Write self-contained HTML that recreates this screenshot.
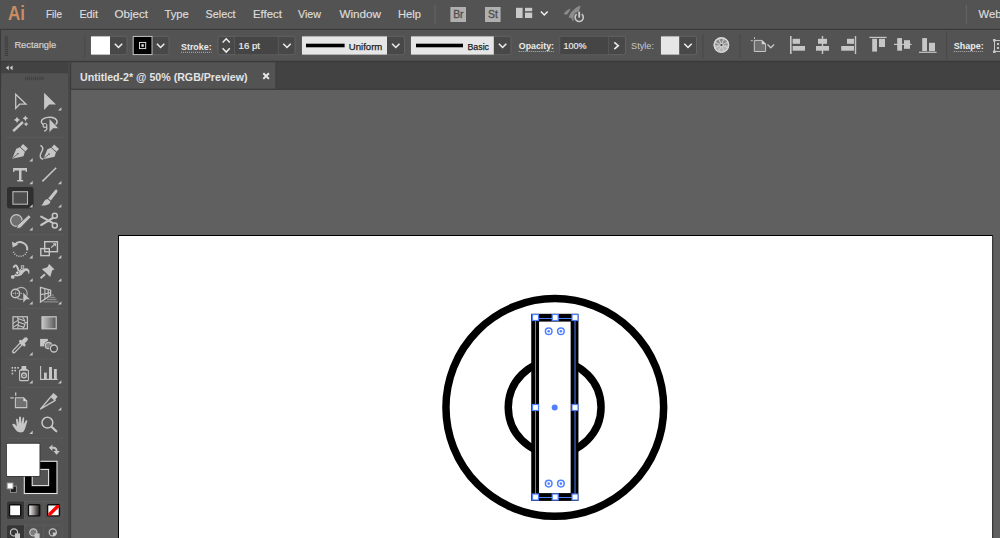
<!DOCTYPE html>
<html><head><meta charset="utf-8"><title>Illustrator</title>
<style>
html,body{margin:0;padding:0;background:#606060;overflow:hidden}
body{width:1000px;height:538px;position:relative}
svg{position:absolute;left:0;top:0;display:block;font-family:"Liberation Sans",sans-serif}
</style></head><body>
<svg width="1000" height="538" viewBox="0 0 1000 538">
<rect x="0" y="0" width="1000" height="538" fill="#606060" />
<rect x="0" y="0" width="1000" height="29" fill="#535353" />
<rect x="0" y="28.8" width="1000" height="1.3" fill="#3a3a3a" />
<rect x="0" y="30" width="1000" height="31" fill="#535353" />
<rect x="0" y="30" width="1" height="31" fill="#3a3a3a" />
<rect x="0" y="60.9" width="1000" height="29" fill="#424242" />
<rect x="0" y="60.9" width="1000" height="1.3" fill="#3a3a3a" />
<rect x="0" y="62" width="1.2" height="476" fill="#3a3a3a" />
<rect x="1.2" y="62.2" width="67" height="11" fill="#424242" />
<rect x="1.2" y="73.2" width="67" height="465" fill="#535353" />
<rect x="68.1" y="62" width="2.1" height="476" fill="#474747" />
<rect x="70.1" y="62" width="1.0" height="476" fill="#3c3c3c" />
<rect x="71.2" y="62.3" width="204.5" height="26.5" fill="#535353" />
<rect x="275.7" y="62.3" width="0.8" height="26.5" fill="#3a3a3a" />
<rect x="71.2" y="88.8" width="929" height="1.2" fill="#3e3e3e" />
<text x="8" y="20" font-size="20" fill="#c98d62" font-weight="bold" textLength="17" lengthAdjust="spacingAndGlyphs" >Ai</text>
<text x="46" y="18.2" font-size="11.6" fill="#dddddd" font-weight="normal" textLength="16" lengthAdjust="spacingAndGlyphs" stroke="#dddddd" stroke-width="0.18">File</text>
<text x="79.4" y="18.2" font-size="11.6" fill="#dddddd" font-weight="normal" textLength="18.6" lengthAdjust="spacingAndGlyphs" stroke="#dddddd" stroke-width="0.18">Edit</text>
<text x="114.4" y="18.2" font-size="11.6" fill="#dddddd" font-weight="normal" textLength="33.6" lengthAdjust="spacingAndGlyphs" stroke="#dddddd" stroke-width="0.18">Object</text>
<text x="164.4" y="18.2" font-size="11.6" fill="#dddddd" font-weight="normal" textLength="24.35" lengthAdjust="spacingAndGlyphs" stroke="#dddddd" stroke-width="0.18">Type</text>
<text x="205.6" y="18.2" font-size="11.6" fill="#dddddd" font-weight="normal" textLength="30.0" lengthAdjust="spacingAndGlyphs" stroke="#dddddd" stroke-width="0.18">Select</text>
<text x="253" y="18.2" font-size="11.6" fill="#dddddd" font-weight="normal" textLength="29" lengthAdjust="spacingAndGlyphs" stroke="#dddddd" stroke-width="0.18">Effect</text>
<text x="298" y="18.2" font-size="11.6" fill="#dddddd" font-weight="normal" textLength="23" lengthAdjust="spacingAndGlyphs" stroke="#dddddd" stroke-width="0.18">View</text>
<text x="339.4" y="18.2" font-size="11.6" fill="#dddddd" font-weight="normal" textLength="41.6" lengthAdjust="spacingAndGlyphs" stroke="#dddddd" stroke-width="0.18">Window</text>
<text x="398" y="18.2" font-size="11.6" fill="#dddddd" font-weight="normal" textLength="23" lengthAdjust="spacingAndGlyphs" stroke="#dddddd" stroke-width="0.18">Help</text>
<text x="978.6" y="18.2" font-size="11.6" fill="#dddddd" font-weight="normal" textLength="22.8" lengthAdjust="spacingAndGlyphs" stroke="#dddddd" stroke-width="0.18">Web</text>
<rect x="434.5" y="5" width="1" height="18.5" fill="#666666" />
<rect x="965.8" y="5" width="1" height="18.5" fill="#666666" />
<rect x="450.4" y="7" width="15.6" height="15" fill="#b0b0b0" />
<rect x="485" y="7" width="15.6" height="15" fill="#b0b0b0" />
<text x="453.2" y="18.2" font-size="10.5" fill="#4c4c4c" font-weight="normal" textLength="10.4" lengthAdjust="spacingAndGlyphs" stroke="#4c4c4c" stroke-width="0.3">Br</text>
<text x="488" y="18.2" font-size="10.5" fill="#4c4c4c" font-weight="normal" textLength="9.8" lengthAdjust="spacingAndGlyphs" stroke="#4c4c4c" stroke-width="0.3">St</text>
<rect x="516" y="7.8" width="6.6" height="10.2" fill="#c9c9c9" />
<rect x="525" y="7.8" width="7.2" height="3.4" fill="#c9c9c9" />
<rect x="525" y="12.6" width="7.2" height="5.4" fill="#c9c9c9" />
<path d="M540.9 11.45L544.3 14.95L547.6999999999999 11.45" fill="none" stroke="#ececec" stroke-width="1.6"/>
<g fill="#8c8c8c"><path d="M580.4 5.6C575.6 7 570.4 12 568.6 17.2L572.8 18.8C577.2 14.6 580.2 10 580.4 5.6Z"/><path d="M570.6 8.4C567.6 9.4 565 11.4 563.6 14L566.8 14.8C568.6 12.6 570 10.6 570.6 8.4Z"/><path d="M571.6 18L573 22L574 18.6Z"/></g>
<circle cx="579.2" cy="17.2" r="5.6" fill="#535353"/><path d="M576.6 14.2A4.1 4.1 0 1 0 581.8 14.2" fill="none" stroke="#c8c8c8" stroke-width="1.6"/><path d="M579.2 11.6V17.6" stroke="#c8c8c8" stroke-width="1.9"/>
<rect x="4.8" y="36.4" width="3.2" height="1" fill="#3a3a3a" />
<rect x="4.8" y="38.449999999999996" width="3.2" height="1" fill="#3a3a3a" />
<rect x="4.8" y="40.5" width="3.2" height="1" fill="#3a3a3a" />
<rect x="4.8" y="42.55" width="3.2" height="1" fill="#3a3a3a" />
<rect x="4.8" y="44.599999999999994" width="3.2" height="1" fill="#3a3a3a" />
<rect x="4.8" y="46.65" width="3.2" height="1" fill="#3a3a3a" />
<rect x="4.8" y="48.699999999999996" width="3.2" height="1" fill="#3a3a3a" />
<rect x="4.8" y="50.75" width="3.2" height="1" fill="#3a3a3a" />
<rect x="4.8" y="52.8" width="3.2" height="1" fill="#3a3a3a" />
<rect x="4.8" y="54.849999999999994" width="3.2" height="1" fill="#3a3a3a" />
<text x="14.4" y="48.2" font-size="9.5" fill="#d2d2d2" font-weight="normal" textLength="41.85" lengthAdjust="spacingAndGlyphs" stroke="#d2d2d2" stroke-width="0.2">Rectangle</text>
<rect x="84.5" y="34" width="0.8" height="23.5" fill="#484848" />
<rect x="91" y="36.3" width="36" height="18.4" rx="1.8" fill="#484848" stroke="#646464" stroke-width="0.9"/>
<rect x="91" y="36.4" width="19" height="18.2" fill="#ffffff" />
<path d="M114.8 43.75L118.5 47.45L122.2 43.75" fill="none" stroke="#ececec" stroke-width="1.6"/>
<rect x="133" y="36.3" width="36" height="18.4" rx="1.8" fill="#484848" stroke="#646464" stroke-width="0.9"/>
<rect x="133.2" y="36.4" width="18.8" height="18.2" fill="#000000" stroke="#cfcfcf" stroke-width="0.9"/>
<rect x="139.5" y="42.4" width="6.2" height="6.2" fill="none" stroke="#e8e8e8" stroke-width="0.9"/>
<rect x="141.4" y="44.3" width="2.4" height="2.4" fill="#e8e8e8" />
<path d="M156.9 43.75L160.6 47.45L164.29999999999998 43.75" fill="none" stroke="#ececec" stroke-width="1.6"/>
<text x="181" y="49.6" font-size="9.5" fill="#ececec" font-weight="bold" textLength="30.6" lengthAdjust="spacingAndGlyphs" >Stroke:</text>
<path d="M181 52.3H211.6" stroke="#bdbdbd" stroke-width="0.9" stroke-dasharray="1 1"/>
<rect x="218" y="36.3" width="77" height="18.4" rx="1.8" fill="#484848" stroke="#646464" stroke-width="0.9"/>
<rect x="235" y="36.7" width="42.6" height="17.6" fill="#454545" />
<rect x="234.2" y="36.7" width="0.8" height="17.6" fill="#5c5c5c" />
<rect x="277.8" y="36.7" width="0.9" height="17.6" fill="#5c5c5c" />
<path d="M222.6 42.550000000000004L226.2 38.85L229.79999999999998 42.550000000000004" fill="none" stroke="#ececec" stroke-width="1.5"/>
<path d="M222.6 48.35L226.2 52.050000000000004L229.79999999999998 48.35" fill="none" stroke="#ececec" stroke-width="1.5"/>
<text x="238.6" y="48.9" font-size="9.5" fill="#ececec" font-weight="normal" textLength="21.4" lengthAdjust="spacingAndGlyphs" stroke="#ececec" stroke-width="0.2">16 pt</text>
<path d="M283.3 43.75L287 47.45L290.7 43.75" fill="none" stroke="#ececec" stroke-width="1.6"/>
<rect x="302" y="36.3" width="102.5" height="18.4" rx="1.8" fill="#484848" stroke="#646464" stroke-width="0.9"/>
<rect x="302" y="36.4" width="85" height="18.2" fill="#e6e6e6" />
<rect x="306" y="43.7" width="38.6" height="3.6" fill="#000" />
<text x="348.8" y="49.6" font-size="9.5" fill="#1c1c1c" font-weight="normal" textLength="33.5" lengthAdjust="spacingAndGlyphs" stroke="#1c1c1c" stroke-width="0.25">Uniform</text>
<path d="M392.1 43.75L395.8 47.45L399.5 43.75" fill="none" stroke="#ececec" stroke-width="1.6"/>
<rect x="411" y="36.3" width="100" height="18.4" rx="1.8" fill="#484848" stroke="#646464" stroke-width="0.9"/>
<rect x="411" y="36.4" width="82.8" height="18.2" fill="#e6e6e6" />
<rect x="416" y="43.7" width="47" height="3.6" fill="#000" />
<text x="467.5" y="49.6" font-size="9.5" fill="#1c1c1c" font-weight="normal" textLength="21.5" lengthAdjust="spacingAndGlyphs" stroke="#1c1c1c" stroke-width="0.25">Basic</text>
<path d="M498.90000000000003 43.75L502.6 47.45L506.3 43.75" fill="none" stroke="#ececec" stroke-width="1.6"/>
<text x="518.8" y="48.8" font-size="9.5" fill="#ececec" font-weight="bold" textLength="35.2" lengthAdjust="spacingAndGlyphs" >Opacity:</text>
<path d="M518.75 51.5H554" stroke="#bdbdbd" stroke-width="0.9" stroke-dasharray="1 1"/>
<rect x="560" y="36.3" width="65.5" height="18.4" rx="1.8" fill="#484848" stroke="#646464" stroke-width="0.9"/>
<rect x="560.4" y="36.7" width="48" height="17.6" fill="#454545" />
<rect x="608.3" y="36.7" width="0.7" height="17.6" fill="#5c5c5c" />
<text x="563.6" y="48.5" font-size="9.5" fill="#ececec" font-weight="normal" textLength="23.0" lengthAdjust="spacingAndGlyphs" stroke="#ececec" stroke-width="0.2">100%</text>
<path d="M614.3 42.3L618.3 45.7L614.3 49.1" fill="none" stroke="#ececec" stroke-width="1.6"/>
<text x="631" y="48.8" font-size="9.5" fill="#c6c6c6" font-weight="normal" textLength="23" lengthAdjust="spacingAndGlyphs" >Style:</text>
<rect x="661" y="36.3" width="35.5" height="18.4" rx="1.8" fill="#484848" stroke="#646464" stroke-width="0.9"/>
<rect x="661" y="36.4" width="18.2" height="18.2" fill="#e6e6e6" />
<path d="M684.3 43.75L688 47.45L691.7 43.75" fill="none" stroke="#ececec" stroke-width="1.6"/>
<rect x="702.6" y="34" width="0.9" height="23.5" fill="#484848" />
<rect x="739.6" y="34" width="0.9" height="23.5" fill="#484848" />
<circle cx="721.4" cy="45" r="7.2" fill="#8c8c8c" stroke="#d8d8d8" stroke-width="1.3"/>
<path d="M714.2 45A7.2 7.2 0 0 0 728.6 45Z" fill="#b4b4b4"/>
<path d="M723.06 45.69L727.87 47.68" stroke="#d6d6d6" stroke-width="0.9"/>
<path d="M722.09 46.66L724.08 51.47" stroke="#d6d6d6" stroke-width="0.9"/>
<path d="M720.71 46.66L718.72 51.47" stroke="#d6d6d6" stroke-width="0.9"/>
<path d="M719.74 45.69L714.93 47.68" stroke="#d6d6d6" stroke-width="0.9"/>
<path d="M719.74 44.31L714.93 42.32" stroke="#d6d6d6" stroke-width="0.9"/>
<path d="M720.71 43.34L718.72 38.53" stroke="#d6d6d6" stroke-width="0.9"/>
<path d="M722.09 43.34L724.08 38.53" stroke="#d6d6d6" stroke-width="0.9"/>
<path d="M723.06 44.31L727.87 42.32" stroke="#d6d6d6" stroke-width="0.9"/>
<circle cx="721.4" cy="45" r="7.2" fill="none" stroke="#d8d8d8" stroke-width="1.3"/><circle cx="721.4" cy="45" r="2" fill="#d0d0d0"/><circle cx="721.4" cy="45" r="1.1" fill="#3c3c3c"/>
<path d="M754.3 40.4H762L765.6 44V51.5H754.3Z" fill="#707070" stroke="#c6c6c6" stroke-width="1"/><path d="M762 40.4L765.6 44H762Z" fill="#dcdcdc" stroke="#c6c6c6" stroke-width="0.6"/><path d="M750.8 40.7H752.8M754.5 37.2V39" stroke="#c6c6c6" stroke-width="1"/>
<path d="M767.5 44.45L770.8 47.75L774.0999999999999 44.45" fill="none" stroke="#c6c6c6" stroke-width="1.3"/>
<rect x="790" y="36" width="1.6" height="18" fill="#c6c6c6" />
<rect x="792.6" y="38.8" width="7.4" height="5" fill="#c6c6c6" />
<rect x="792.6" y="46" width="12.4" height="4.7" fill="#c6c6c6" />
<rect x="821.8" y="36" width="1.4" height="18" fill="#c6c6c6" />
<rect x="818" y="38.8" width="9" height="5" fill="#c6c6c6" />
<rect x="816" y="46" width="13" height="4.7" fill="#c6c6c6" />
<rect x="854.8" y="36" width="1.4" height="18" fill="#c6c6c6" />
<rect x="847" y="38.8" width="7" height="5" fill="#c6c6c6" />
<rect x="841.2" y="46" width="12.8" height="4.7" fill="#c6c6c6" />
<rect x="869.4" y="36.8" width="17.2" height="1.2" fill="#c6c6c6" />
<rect x="872.2" y="38.8" width="4.8" height="12.8" fill="#c6c6c6" />
<rect x="879" y="38.8" width="6" height="8.2" fill="#c6c6c6" />
<rect x="894" y="43.8" width="17.6" height="1.2" fill="#c6c6c6" />
<rect x="897.2" y="38.1" width="4.8" height="12.6" fill="#c6c6c6" />
<rect x="904" y="40.2" width="6" height="8.6" fill="#c6c6c6" />
<rect x="919" y="51.7" width="17.6" height="1.2" fill="#c6c6c6" />
<rect x="922.2" y="38.1" width="4.8" height="13" fill="#c6c6c6" />
<rect x="929" y="42.8" width="6" height="8.3" fill="#c6c6c6" />
<rect x="946.2" y="31" width="0.9" height="29.5" fill="#484848" />
<text x="953.75" y="49.2" font-size="9.5" fill="#ececec" font-weight="bold" textLength="30.0" lengthAdjust="spacingAndGlyphs" >Shape:</text>
<path d="M953.75 51.5H983.75" stroke="#bdbdbd" stroke-width="0.9" stroke-dasharray="1 1"/>
<path d="M994.5 40.5V51.5M994.5 40.5H1000M994.5 51.5H1000" stroke="#c6c6c6" stroke-width="1" fill="none"/><rect x="993" y="39" width="2.6" height="2.6" fill="#c6c6c6"/><rect x="993" y="50.4" width="2.6" height="2.6" fill="#c6c6c6"/><rect x="997" y="43" width="2" height="2" fill="#c6c6c6"/><rect x="997" y="47" width="2" height="2" fill="#c6c6c6"/>
<text x="80" y="80.8" font-size="10.6" fill="#e4e4e4" font-weight="bold" textLength="167.5" lengthAdjust="spacingAndGlyphs" >Untitled-2* @ 50% (RGB/Preview)</text>
<path d="M263.3 73.3L268.9 78.9M268.9 73.3L263.3 78.9" stroke="#e8e8e8" stroke-width="2"/>
<path d="M8.8 65.4L5.8 67.8L8.8 70.2ZM12.6 65.4L9.6 67.8L12.6 70.2Z" fill="#d0d0d0"/>
<rect x="25.3" y="76.6" width="0.9" height="3.6" fill="#3e3e3e" />
<rect x="27.2" y="76.6" width="0.9" height="3.6" fill="#3e3e3e" />
<rect x="29.1" y="76.6" width="0.9" height="3.6" fill="#3e3e3e" />
<rect x="31.0" y="76.6" width="0.9" height="3.6" fill="#3e3e3e" />
<rect x="32.9" y="76.6" width="0.9" height="3.6" fill="#3e3e3e" />
<rect x="34.8" y="76.6" width="0.9" height="3.6" fill="#3e3e3e" />
<rect x="36.7" y="76.6" width="0.9" height="3.6" fill="#3e3e3e" />
<rect x="38.6" y="76.6" width="0.9" height="3.6" fill="#3e3e3e" />
<rect x="40.5" y="76.6" width="0.9" height="3.6" fill="#3e3e3e" />
<rect x="42.4" y="76.6" width="0.9" height="3.6" fill="#3e3e3e" />
<rect x="6" y="136.9" width="57.5" height="1" fill="#5b5b5b"/>
<rect x="6" y="233.8" width="57.5" height="1" fill="#5b5b5b"/>
<rect x="6" y="307.8" width="57.5" height="1" fill="#5b5b5b"/>
<rect x="6" y="358.7" width="57.5" height="1" fill="#5b5b5b"/>
<rect x="6" y="386.9" width="57.5" height="1" fill="#5b5b5b"/>
<rect x="6" y="437.7" width="57.5" height="1" fill="#5b5b5b"/>
<path d="M15.7 94.2V108.4L19.6 104.2H26Z" fill="none" stroke="#c6c6c6" stroke-width="1.3" stroke-linejoin="miter"/>
<path d="M44.1 92.8V110L49.2 104.4H56Z" fill="#c6c6c6"/>
<path d="M61.4 110.6H58.0L61.4 107.19999999999999Z" fill="#c6c6c6"/>
<path d="M13.2 131.2L22.9 122" stroke="#c6c6c6" stroke-width="2.5"/>
<path d="M17 116.7L18.088 118.81200000000001L20.2 119.9L18.088 120.988L17 123.10000000000001L15.911999999999999 120.988L13.8 119.9L15.911999999999999 118.81200000000001Z" fill="#c6c6c6"/>
<path d="M25.4 115.39999999999999L26.386 117.314L28.299999999999997 118.3L26.386 119.286L25.4 121.2L24.413999999999998 119.286L22.5 118.3L24.413999999999998 117.314Z" fill="#c6c6c6"/>
<path d="M26.1 121.8L26.882 123.318L28.400000000000002 124.1L26.882 124.88199999999999L26.1 126.39999999999999L25.318 124.88199999999999L23.8 124.1L25.318 123.318Z" fill="#c6c6c6"/>
<path d="M43 124.4C40.4 122.6 41 120 43.6 118.6C47.4 116.4 54.4 116.6 56.4 119.8C57.4 121.4 57 123.4 55.4 124.6" fill="none" stroke="#c6c6c6" stroke-width="1.5"/>
<circle cx="45" cy="125.4" r="1.9" fill="none" stroke="#c6c6c6" stroke-width="1.2"/><path d="M46.6 126.6C47.4 128.8 46.6 130.6 44.2 131" fill="none" stroke="#c6c6c6" stroke-width="1.3"/>
<path d="M49.2 118.4V132.8L53 128.6H58.8Z" fill="#c6c6c6" stroke="#535353" stroke-width="0.6"/>
<g transform="translate(0 0)"><path d="M20 147.3L24.9 151.8L23.5 156.3L12.1 158.8L16.3 148.8Z" fill="#c6c6c6"/><path d="M23 144.1L27.9 148.5L25.4 151.4L20.4 147Z" fill="#c6c6c6"/><path d="M20.1 147.1L25.1 151.7" stroke="#535353" stroke-width="0.5"/><path d="M12.8 158L17.6 154" stroke="#535353" stroke-width="0.8"/><circle cx="17.9" cy="153.7" r="0.8" fill="#535353"/></g>
<g transform="translate(31.1 0.4)"><path d="M20 147.3L24.9 151.8L23.5 156.3L12.1 158.8L16.3 148.8Z" fill="#c6c6c6"/><path d="M23 144.1L27.9 148.5L25.4 151.4L20.4 147Z" fill="#c6c6c6"/><path d="M20.1 147.1L25.1 151.7" stroke="#535353" stroke-width="0.5"/><path d="M12.8 158L17.6 154" stroke="#535353" stroke-width="0.8"/><circle cx="17.9" cy="153.7" r="0.8" fill="#535353"/></g>
<path d="M40.4 145.4C43.4 147 43.4 149.6 41.4 152.4C39.4 155.2 39.8 158.8 43 159.2" fill="none" stroke="#c6c6c6" stroke-width="1.5"/>
<path d="M32.7 161.4H29.300000000000004L32.7 158.0Z" fill="#c6c6c6"/>
<path d="M13.1 168.1H27V172.1H25.7V170.5H21.5V180H23.2V181.4H17.2V180H19V170.5H14.4V172.1H13.1Z" fill="#c6c6c6"/>
<path d="M42.4 181.4L56.2 167.8" stroke="#c6c6c6" stroke-width="1.5"/>
<path d="M32.7 184.2H29.300000000000004L32.7 180.79999999999998Z" fill="#c6c6c6"/>
<path d="M61.4 184.2H58.0L61.4 180.79999999999998Z" fill="#c6c6c6"/>
<rect x="7" y="187" width="26.6" height="21.4" rx="2.4" fill="#2f2f2f"/>
<rect x="12.9" y="191.7" width="14.6" height="12.5" fill="#4c4c4c" stroke="#b6b6b6" stroke-width="1.1"/>
<path d="M56.9 189.7C57.8 190.4 57.5 191.8 56.6 193L50.9 200.5L48.1 198.4L54.3 191C55.2 189.9 56.2 189.3 56.9 189.7Z" fill="#c6c6c6"/><path d="M47.3 199L50.3 201.3C50.6 204.4 46.6 205.9 41.1 205.4C44 204 43.2 199.8 47.3 199Z" fill="#c6c6c6"/>
<path d="M32.7 207.6H29.300000000000004L32.7 204.2Z" fill="#c6c6c6"/>
<path d="M61.4 207.6H58.0L61.4 204.2Z" fill="#c6c6c6"/>
<circle cx="16.4" cy="220.5" r="5.8" fill="#707070" stroke="#c6c6c6" stroke-width="1.3"/>
<path d="M28.7 214.9L31.1 217L20.5 227.9L16.7 228.8L17.3 225.3Z" fill="#c6c6c6" stroke="#535353" stroke-width="0.8"/>
<path d="M41.2 216.7L52.6 222.9M41.2 225L52.6 218.2" stroke="#c6c6c6" stroke-width="2.1" stroke-linecap="round"/><circle cx="54.8" cy="215.8" r="2.5" fill="none" stroke="#c6c6c6" stroke-width="1.5"/><circle cx="54.8" cy="225.6" r="2.5" fill="none" stroke="#c6c6c6" stroke-width="1.5"/>
<path d="M32.7 230.6H29.300000000000004L32.7 227.2Z" fill="#c6c6c6"/>
<path d="M61.4 230.6H58.0L61.4 227.2Z" fill="#c6c6c6"/>
<path d="M14.82 244.55A7.1 7.1 0 0 1 27.13 250.29" fill="none" stroke="#c6c6c6" stroke-width="1.9"/><path d="M12 241.8L18.2 244.6L12.7 247.5Z" fill="#c6c6c6"/><path d="M26.68 251.96A7.1 7.1 0 0 1 13.16 250.78" fill="none" stroke="#c6c6c6" stroke-width="1.5" stroke-dasharray="1 1.25"/>
<rect x="44.7" y="241.7" width="12.7" height="10" fill="none" stroke="#c6c6c6" stroke-width="1.4"/><rect x="40.8" y="248.6" width="8.5" height="7" fill="none" stroke="#c6c6c6" stroke-width="1.4"/><path d="M51.2 247.6L55 244" fill="none" stroke="#c6c6c6" stroke-width="1.3"/><path d="M52.6 243.2H56V246.6Z" fill="#c6c6c6"/>
<path d="M32.7 258.4H29.300000000000004L32.7 254.99999999999997Z" fill="#c6c6c6"/>
<path d="M61.4 258.4H58.0L61.4 254.99999999999997Z" fill="#c6c6c6"/>
<path d="M13.6 267.9C13.7 265.5 15.9 264.7 17 266.5C18 268.4 18.5 270.4 18.7 272.4" fill="none" stroke="#c6c6c6" stroke-width="1.9"/><path d="M14.2 275.2C16 273.6 17.6 272.8 18.6 270.8C20.6 270.8 22.4 269.3 24.4 268.6C27.6 267.4 29.7 269.6 29.5 272C29.4 273 29.2 273.8 28.7 274.5C28.4 272.4 27.6 270.7 26.2 270.7C24 270.9 23 274.4 20.6 275.6C18.4 276.7 15.4 276.7 14.2 275.2Z" fill="#c6c6c6"/><path d="M21.8 268L18.2 272" stroke="#c6c6c6" stroke-width="0.9"/><rect x="21.3" y="265.8" width="2.4" height="2.4" fill="#535353" stroke="#c6c6c6" stroke-width="0.9"/><circle cx="17.3" cy="272.7" r="1.6" fill="#e4e4e4" stroke="#535353" stroke-width="0.8"/><circle cx="12.8" cy="276.9" r="1.9" fill="#c6c6c6"/><path d="M13.6 276.2L16 274.6" stroke="#c6c6c6" stroke-width="0.9"/>
<path d="M49.1 264.1L54.5 269.4L52.7 270L52 271L50.2 276.9L41.9 269.1L47.4 267.2L48.3 265.5Z" fill="#c6c6c6"/><path d="M45 274.2L40.6 278.2" stroke="#c6c6c6" stroke-width="1.9"/>
<path d="M32.7 281.6H29.300000000000004L32.7 278.20000000000005Z" fill="#c6c6c6"/>
<path d="M61.4 281.6H58.0L61.4 278.20000000000005Z" fill="#c6c6c6"/>
<circle cx="21.2" cy="293.4" r="6" fill="none" stroke="#b0b0b0" stroke-width="1.1"/><circle cx="15.4" cy="293.5" r="4.2" fill="#4a4a4a" fill-opacity="0.55" stroke="#c6c6c6" stroke-width="1.4"/><path d="M12.8 293.4H22.6" stroke="#c6c6c6" stroke-width="1.1" stroke-dasharray="1 1"/><path d="M23 292.2V303L26.4 299.4H30.4Z" fill="#c6c6c6" stroke="#535353" stroke-width="0.5"/>
<path d="M40.5 287.4L50.6 290.2V295.4L40.5 302Z" fill="none" stroke="#c6c6c6" stroke-width="1.3"/><path d="M44.9 288.6V299.2M48.2 289.6V297M40.5 294.6L50.6 292.8" stroke="#c6c6c6" stroke-width="1.1" fill="none"/><path d="M51.6 295.2H53.8M49.8 297.3H55.2M47 299.5H56.6M43.4 301.8H58.4" stroke="#8c8c8c" stroke-width="1.3"/>
<path d="M32.7 304.6H29.300000000000004L32.7 301.20000000000005Z" fill="#c6c6c6"/>
<path d="M61.4 304.6H58.0L61.4 301.20000000000005Z" fill="#c6c6c6"/>
<rect x="13" y="316.8" width="14.4" height="12" fill="none" stroke="#c6c6c6" stroke-width="1.2"/><path d="M17.6 317C18.5 320 18.5 325 17.8 328.6M22.4 317C25.6 320.4 25.8 325 23 328.6M17.9 318.6L24.4 320.8M18.3 322L25.4 324.4M18.2 325.4L24.2 327.6M17.9 320.4L13 323.4M18.1 324.2L13 327.4M25.4 322.6H27.4" fill="none" stroke="#c6c6c6" stroke-width="1.05"/>
<defs><linearGradient id="gt" x1="0" x2="1" y1="0" y2="0"><stop offset="0" stop-color="#c8c8c8"/><stop offset="1" stop-color="#565656"/></linearGradient><linearGradient id="gb" x1="0" x2="1" y1="0" y2="0"><stop offset="0" stop-color="#ffffff"/><stop offset="1" stop-color="#1a1212"/></linearGradient></defs>
<rect x="42" y="316.8" width="14.2" height="12" fill="url(#gt)" stroke="#c6c6c6" stroke-width="1.2"/>
<path d="M13.9 351.5L21.6 343.4" stroke="#c6c6c6" stroke-width="3.9" stroke-linecap="round"/><path d="M14.1 351.3L20.4 344.7" stroke="#535353" stroke-width="1.5" stroke-linecap="round"/><path d="M20.4 341.3L24.2 345" stroke="#c6c6c6" stroke-width="2.8" stroke-linecap="round"/><path d="M22.4 342.8L25.8 339.3" stroke="#c6c6c6" stroke-width="4.1" stroke-linecap="round"/>
<rect x="40.1" y="338.9" width="7.8" height="7.5" fill="#c6c6c6"/><circle cx="48.5" cy="345.5" r="4.4" fill="#535353"/><circle cx="48.5" cy="345.5" r="3.2" fill="#8a8a8a" stroke="#c6c6c6" stroke-width="1.2"/><circle cx="53.9" cy="348.5" r="4.7" fill="#535353"/><circle cx="53.9" cy="348.5" r="3.5" fill="#4e4e4e" stroke="#c6c6c6" stroke-width="1.3"/>
<path d="M32.7 355.4H29.300000000000004L32.7 352.0Z" fill="#c6c6c6"/>
<rect x="11.6" y="367.0" width="1.6" height="1.6" fill="#c6c6c6"/>
<rect x="14.399999999999999" y="367.0" width="1.6" height="1.6" fill="#c6c6c6"/>
<rect x="17.2" y="367.0" width="1.6" height="1.6" fill="#c6c6c6"/>
<rect x="11.6" y="369.8" width="1.6" height="1.6" fill="#c6c6c6"/>
<rect x="14.399999999999999" y="369.8" width="1.6" height="1.6" fill="#c6c6c6"/>
<rect x="11.6" y="372.8" width="1.6" height="1.6" fill="#c6c6c6"/>
<rect x="19.6" y="370.2" width="8.8" height="10.4" rx="0.8" fill="none" stroke="#c6c6c6" stroke-width="1.1"/><path d="M21.6 366H26.2V368.4L28.4 370.3H19.6L21.6 368.4Z" fill="#c6c6c6"/><circle cx="24" cy="375.4" r="2.4" fill="none" stroke="#c6c6c6" stroke-width="1.3"/><circle cx="24" cy="375.4" r="0.9" fill="#a0a0a0"/>
<path d="M40.6 366V379.4H57.6" fill="none" stroke="#c6c6c6" stroke-width="1.1"/><rect x="44" y="372.6" width="2.8" height="6.4" fill="#c6c6c6"/><rect x="49" y="367" width="3" height="12" fill="#c6c6c6"/><rect x="54" y="369" width="2.8" height="10" fill="#c6c6c6"/>
<path d="M32.7 383.6H29.300000000000004L32.7 380.20000000000005Z" fill="#c6c6c6"/>
<path d="M61.4 383.6H58.0L61.4 380.20000000000005Z" fill="#c6c6c6"/>
<path d="M15.4 397.8H23.6L26.8 401V407.6H15.4Z" fill="#707070" stroke="#c6c6c6" stroke-width="1.1"/><path d="M23.6 397.8V401H26.8Z" fill="#dcdcdc" stroke="#c6c6c6" stroke-width="0.6"/><path d="M10.3 397.9H13.8M15.7 392.5V395.7" stroke="#c6c6c6" stroke-width="1.3"/>
<path d="M40.6 409L51 396.6L55.2 400.4Z" fill="none" stroke="#c6c6c6" stroke-width="1.4" stroke-linejoin="round"/><path d="M50.8 396L53.4 393L57.6 396.6L55.2 400Z" fill="#c6c6c6"/>
<path d="M61.4 410.6H58.0L61.4 407.20000000000005Z" fill="#c6c6c6"/>
<path d="M17.2 431.6C15.4 430 13.6 427 12.2 424.6C12.8 423.4 14.4 423.6 15.4 424.8L16.8 426.4L16 419.6C16.2 418.4 17.6 418.4 17.8 419.6L18.8 423.8L19 417.4C19.2 416.2 20.8 416.2 21 417.4L21.4 423.6L22.6 418C22.8 417 24.2 417.2 24.2 418.2L23.8 424L25.8 420.6C26.4 419.8 27.6 420.4 27.2 421.4C26 424.8 25.6 429 23.4 431.8C21.4 432.6 19 432.6 17.2 431.6Z" fill="#c6c6c6"/>
<circle cx="47.4" cy="422.7" r="5.4" fill="none" stroke="#c6c6c6" stroke-width="1.5"/><path d="M51.7 426.9L56.3 431.3" stroke="#c6c6c6" stroke-width="2.2" stroke-linecap="round"/>
<path d="M32.7 434H29.300000000000004L32.7 430.6Z" fill="#c6c6c6"/>
<path d="M51.4 447.7H53.4C55.8 447.7 56.6 449.2 56.6 451.4" fill="none" stroke="#c6c6c6" stroke-width="1.9"/><path d="M48.9 447.7L52.4 444.4V451Z" fill="#c6c6c6"/><path d="M56.6 454.8L53.4 451H59.8Z" fill="#c6c6c6"/>
<rect x="24.3" y="461.3" width="32.7" height="32.2" fill="#000" stroke="#e4e4e4" stroke-width="1.1"/>
<rect x="32.2" y="469.4" width="16.4" height="16.2" fill="#535353" stroke="#e4e4e4" stroke-width="1.1"/>
<rect x="6" y="442.8" width="34.4" height="34" rx="1.6" fill="#353535"/>
<rect x="6.9" y="443.7" width="32.6" height="32.2" rx="0.6" fill="#fff"/>
<rect x="10.4" y="486.2" width="6" height="6.2" fill="#1a1a1a" stroke="#8e8e8e" stroke-width="1"/><rect x="7.2" y="483" width="5.8" height="5.8" fill="#fff" stroke="#9a9a9a" stroke-width="0.9"/>
<rect x="6.8" y="501.4" width="55.4" height="17.6" rx="1.5" fill="#535353" stroke="#5e5e5e" stroke-width="0.8"/>
<path d="M8.4 501.4H23.9V519H8.4Q6.9 519 6.9 517.5V502.9Q6.9 501.4 8.4 501.4Z" fill="#363636"/>
<rect x="24.2" y="501.6" width="0.8" height="17.2" fill="#5e5e5e"/><rect x="43.2" y="501.6" width="0.8" height="17.2" fill="#5e5e5e"/>
<rect x="9.5" y="504.7" width="11.2" height="11.2" rx="0.8" fill="#fff" stroke="#0e0e0e" stroke-width="1.4"/>
<rect x="28.5" y="504.7" width="11.2" height="11.2" rx="0.8" fill="url(#gb)" stroke="#0e0e0e" stroke-width="1.4"/>
<clipPath id="cn"><rect x="48.2" y="505.1" width="10.8" height="10.6"/></clipPath><rect x="47.6" y="504.7" width="11.8" height="11.2" rx="0.8" fill="#fff" stroke="#0e0e0e" stroke-width="1.4"/><path d="M47.4 516.6L59.8 504.2" stroke="#ff0000" stroke-width="3.4" clip-path="url(#cn)"/>
<rect x="6.8" y="525.2" width="55.4" height="14" rx="1.5" fill="#535353" stroke="#5e5e5e" stroke-width="0.8"/>
<path d="M8.4 525.2H23.9V539H6.9V526.7Q6.9 525.2 8.4 525.2Z" fill="#363636"/>
<rect x="24.2" y="525.4" width="0.8" height="13" fill="#5e5e5e"/><rect x="43.2" y="525.4" width="0.8" height="13" fill="#5e5e5e"/>
<circle cx="14" cy="532.4" r="3.6" fill="none" stroke="#c6c6c6" stroke-width="1.2"/><rect x="15" y="533.4" width="5" height="5" fill="#c6c6c6"/>
<circle cx="33.4" cy="532.4" r="3.6" fill="#7a7a7a" stroke="#c6c6c6" stroke-width="1.2"/><rect x="34.6" y="533.4" width="5" height="5" fill="#c6c6c6"/>
<circle cx="52.8" cy="532.4" r="3.6" fill="none" stroke="#c6c6c6" stroke-width="1.2"/><path d="M52.8 532.4H56.4A3.6 3.6 0 0 1 52.8 536Z" fill="#c6c6c6"/>
<rect x="118" y="235" width="875" height="310" fill="#000"/>
<rect x="992" y="235.6" width="1.2" height="310" fill="#3a3a3a"/>
<rect x="119" y="236" width="873" height="310" fill="#fff"/>
<circle cx="554.8" cy="407.45" r="108.85" fill="none" stroke="#000" stroke-width="7.5"/>
<circle cx="554.65" cy="407.3" r="46.4" fill="none" stroke="#000" stroke-width="7.5"/>
<rect x="535.15" y="317.7" width="39.4" height="179.3" fill="#fff" stroke="#000" stroke-width="7.8"/>
<rect x="535.5" y="318.5" width="39.5" height="179" fill="none" stroke="#4f80ff" stroke-width="1"/>
<rect x="532.5" y="314.5" width="6" height="6" fill="#fff" stroke="#4f80ff" stroke-width="1.2"/>
<rect x="552.2" y="314.5" width="6" height="6" fill="#fff" stroke="#4f80ff" stroke-width="1.2"/>
<rect x="572" y="314.5" width="6" height="6" fill="#fff" stroke="#4f80ff" stroke-width="1.2"/>
<rect x="532.5" y="404.5" width="6" height="6" fill="#fff" stroke="#4f80ff" stroke-width="1.2"/>
<rect x="572" y="404.5" width="6" height="6" fill="#fff" stroke="#4f80ff" stroke-width="1.2"/>
<rect x="532.5" y="494" width="6" height="6" fill="#fff" stroke="#4f80ff" stroke-width="1.2"/>
<rect x="552.2" y="494" width="6" height="6" fill="#fff" stroke="#4f80ff" stroke-width="1.2"/>
<rect x="572" y="494" width="6" height="6" fill="#fff" stroke="#4f80ff" stroke-width="1.2"/>
<circle cx="554.7" cy="407.5" r="3" fill="#4f80ff"/>
<circle cx="548.7" cy="331.3" r="3.3" fill="none" stroke="#4f80ff" stroke-width="1.5"/><circle cx="548.7" cy="331.3" r="1.3" fill="#4f80ff"/>
<circle cx="560.9" cy="331.3" r="3.3" fill="none" stroke="#4f80ff" stroke-width="1.5"/><circle cx="560.9" cy="331.3" r="1.3" fill="#4f80ff"/>
<circle cx="548.7" cy="483.6" r="3.3" fill="none" stroke="#4f80ff" stroke-width="1.5"/><circle cx="548.7" cy="483.6" r="1.3" fill="#4f80ff"/>
<circle cx="560.9" cy="483.6" r="3.3" fill="none" stroke="#4f80ff" stroke-width="1.5"/><circle cx="560.9" cy="483.6" r="1.3" fill="#4f80ff"/>
</svg>
</body></html>
